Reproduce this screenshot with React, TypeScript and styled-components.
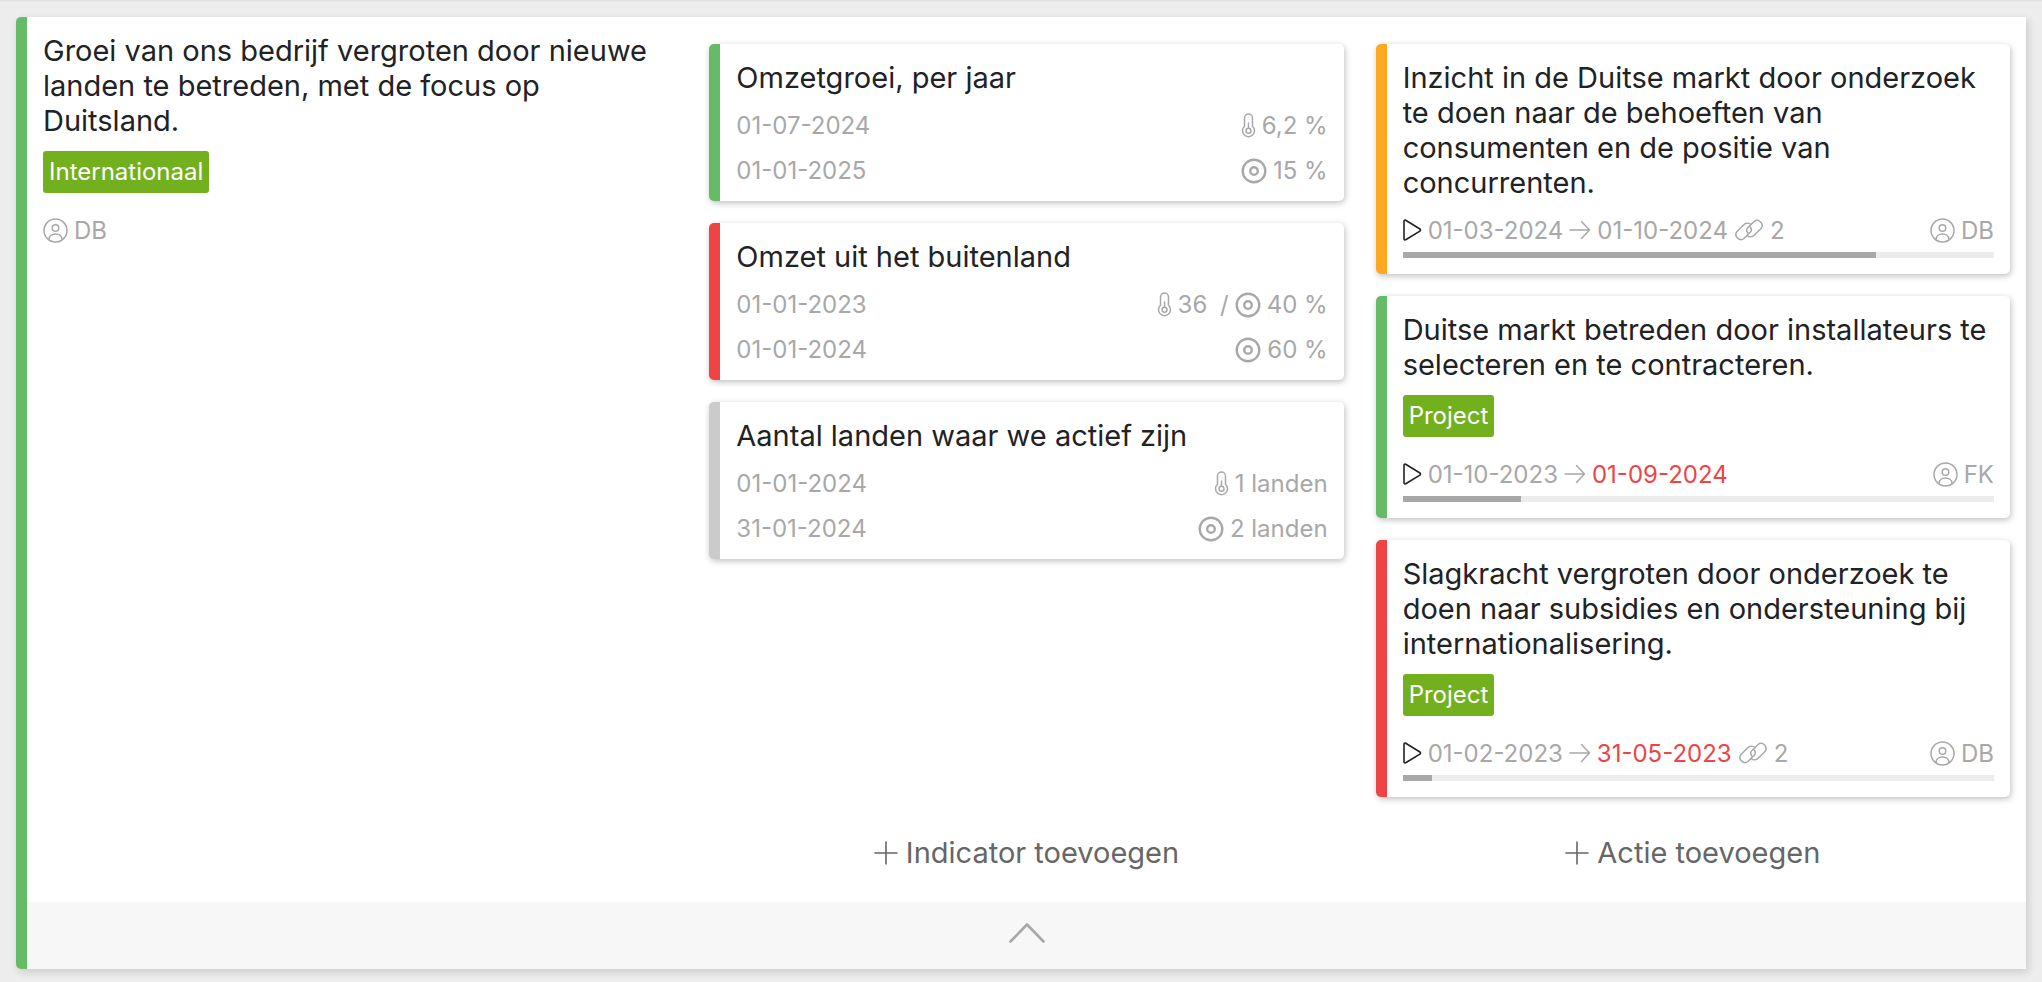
import React from "react";
import styled, { createGlobalStyle } from "styled-components";

const GlobalStyle = createGlobalStyle`
  *, *::before, *::after { box-sizing: border-box; }
  body {
    margin: 0;
    background: #ededed;
    color: #212224;
    font-family: Inter, "Liberation Sans", sans-serif;
    font-size: 24px;
  }
`;

const colors = {
  green: "#66bb66",
  red: "#ef4444",
  orange: "#ffa822",
  grey: "#cbcbcb",
  tag: "#73b01e",
  muted: "#a8a8a8",
  track: "#ececec",
};

const Page = styled.main`
  padding: 17px 16px 13px;
  box-shadow: inset 0 2px 2px -1px rgba(0, 0, 0, 0.06);
`;

const Panel = styled.section`
  border-left: 11px solid ${colors.green};
  border-radius: 5px 0 0 5px;
  background: #fff;
  box-shadow: 2px 3px 8px rgba(0, 0, 0, 0.15);
`;

const Columns = styled.div`
  display: grid;
  grid-template-columns: repeat(3, minmax(0, 1fr));
`;

const Goal = styled.div`
  padding: 16px;
`;

const Column = styled.div`
  display: flex;
  flex-direction: column;
  gap: 22px;
  padding: 27px 16px 32px;
`;

const Card = styled.article<{ $accent: string; $compact?: boolean }>`
  border-left: 11px solid ${(p) => p.$accent};
  border-radius: 5px;
  background: #fff;
  box-shadow: 1px 2px 6px rgba(0, 0, 0, 0.25);
  padding: 16px 16px ${(p) => (p.$compact ? 8 : 16)}px;
`;

const Title = styled.h2`
  margin: 0;
  font-size: 29px;
  line-height: 35px;
  font-weight: 400;
`;

const Tag = styled.span`
  display: block;
  width: fit-content;
  margin: 13px 0 15px;
  padding: 0 6px;
  border-radius: 3px;
  background: ${colors.tag};
  color: #fff;
  line-height: 42px;
`;

const Metrics = styled.div`
  margin-top: 8px;
`;

const Row = styled.div<{ $height: number; $top?: number }>`
  display: flex;
  align-items: center;
  justify-content: space-between;
  height: ${(p) => p.$height}px;
  margin-top: ${(p) => p.$top ?? 0}px;
  color: ${colors.muted};
`;

const Inline = styled.span`
  display: flex;
  align-items: center;
  gap: 6px;
  white-space: pre;
`;

const DueDate = styled.time<{ $late?: boolean }>`
  color: ${(p) => (p.$late ? colors.red : "inherit")};
`;

const Progress = styled.progress`
  display: block;
  appearance: none;
  width: 100%;
  height: 6px;
  border: 0;
  background: ${colors.track};
  &::-webkit-progress-bar { background: ${colors.track}; }
  &::-webkit-progress-value { background: ${colors.muted}; }
`;

const AddButton = styled.button`
  display: flex;
  align-items: center;
  align-self: center;
  gap: 8px;
  margin-top: auto;
  padding: 16px 0 0;
  border: 0;
  background: none;
  color: #666;
  font: inherit;
  font-size: 29px;
  line-height: 35px;
`;

const Collapse = styled.button`
  display: flex;
  align-items: center;
  justify-content: center;
  width: 100%;
  height: 67px;
  padding: 0 0 6px;
  border: 0;
  background: #f7f7f7;
  color: ${colors.muted};
`;

const Icon = styled.svg`
  display: block;
  flex: none;
  fill: none;
  stroke: currentColor;
  stroke-linecap: round;
  stroke-linejoin: round;
`;

const PlayIcon = () => (
  <Icon width="19" height="24" viewBox="0 0 19 24" strokeWidth="1.6" color="#212224">
    <path d="M1 3.2v17.6c0 1 .9 1.5 1.7.9l14.2-8.6c.8-.5.8-1.6 0-2.1L2.7 2.3C1.9 1.800 1 2.300 1 3.200z" />
  </Icon>
);

const ArrowIcon = () => (
  <Icon width="22" height="22" viewBox="0 0 22 22" strokeWidth="1.5">
    <path d="M1 11h19.500M12.500 2.500l8 8.500-8 8.500" />
  </Icon>
);

const LinkIcon = () => (
  <Icon width="30" height="24" viewBox="0 0 30 24" strokeWidth="1.5">
    <path d="M17 6.500C14.800 4.500 11.700 4.800 9.500 7L3 13.500a5 5 0 0 0 7 7L16 14.500c1.700-1.700 1.700-3.700.2-5.500" />
    <path d="M13 17.500C15.200 19.500 18.300 19.200 20.500 17L27 10.500a5 5 0 0 0-7-7L14 9.500c-1.700 1.700-1.700 3.700-.2 5.500" />
  </Icon>
);

const UserIcon = () => (
  <Icon width="25" height="25" viewBox="0 0 25 25" strokeWidth="1.5">
    <circle cx="12.5" cy="12.5" r="11.500" />
    <circle cx="12.5" cy="10" r="3.300" />
    <path d="M6 21.500c0-7.300 13-7.300 13 0" />
  </Icon>
);

const ThermoIcon = () => (
  <Icon width="15" height="25" viewBox="0 0 15 25" strokeWidth="1.5">
    <path d="M3.500 5a4 4 0 0 1 8 0v8.200a6 6 0 1 1-8 0z" />
    <circle cx="7.5" cy="17.800" r="2.500" />
    <path d="M7.500 10v5" />
  </Icon>
);

const TargetIcon = () => (
  <Icon width="26" height="26" viewBox="0 0 26 26" strokeWidth="2.4">
    <circle cx="13" cy="13" r="11.300" />
    <circle cx="13" cy="13" r="3.800" />
  </Icon>
);

const PlusIcon = () => (
  <Icon width="24" height="24" viewBox="0 0 24 24" strokeWidth="1.6">
    <path d="M1 12h22M12 1v22" />
  </Icon>
);

const ChevronIcon = () => (
  <Icon width="36" height="20" viewBox="0 0 36 20" strokeWidth="2.6">
    <path d="M1.500 18.500 18 1.500l16.500 17" />
  </Icon>
);

const User = ({ name }: { name: string }) => (
  <Inline>
    <UserIcon />
    {name}
  </Inline>
);

type Indicator = {
  title: string;
  accent: string;
  dates: [string, string];
  value: string;
  interim?: string;
  target: string;
};

const indicators: Indicator[] = [
  { title: "Omzetgroei, per jaar", accent: colors.green, dates: ["01-07-2024", "01-01-2025"], value: "6,2 %", target: "15 %" },
  { title: "Omzet uit het buitenland", accent: colors.red, dates: ["01-01-2023", "01-01-2024"], value: "36", interim: "40 %", target: "60 %" },
  { title: "Aantal landen waar we actief zijn", accent: colors.grey, dates: ["01-01-2024", "31-01-2024"], value: "1 landen", target: "2 landen" },
];

type Action = {
  title: string;
  accent: string;
  tag?: string;
  start: string;
  end: string;
  late?: boolean;
  links?: number;
  owner: string;
  progress: number;
};

const actions: Action[] = [
  {
    title: "Inzicht in de Duitse markt door onderzoek te doen naar de behoeften van consumenten en de positie van concurrenten.",
    accent: colors.orange, start: "01-03-2024", end: "01-10-2024", links: 2, owner: "DB", progress: 80,
  },
  {
    title: "Duitse markt betreden door installateurs te selecteren en te contracteren.",
    accent: colors.green, tag: "Project", start: "01-10-2023", end: "01-09-2024", late: true, owner: "FK", progress: 20,
  },
  {
    title: "Slagkracht vergroten door onderzoek te doen naar subsidies en ondersteuning bij internationalisering.",
    accent: colors.red, tag: "Project", start: "01-02-2023", end: "31-05-2023", late: true, links: 2, owner: "DB", progress: 5,
  },
];

const IndicatorCard = ({ item }: { item: Indicator }) => (
  <Card $accent={item.accent} $compact>
    <Title>{item.title}</Title>
    <Metrics>
      <Row $height={45}>
        <time>{item.dates[0]}</time>
        <Inline>
          <ThermoIcon />
          {item.value}
          {item.interim && (
            <>
              <span>{" /"}</span>
              <TargetIcon />
              {item.interim}
            </>
          )}
        </Inline>
      </Row>
      <Row $height={45}>
        <time>{item.dates[1]}</time>
        <Inline>
          <TargetIcon />
          {item.target}
        </Inline>
      </Row>
    </Metrics>
  </Card>
);

const ActionCard = ({ item }: { item: Action }) => (
  <Card $accent={item.accent}>
    <Title>{item.title}</Title>
    {item.tag && <Tag>{item.tag}</Tag>}
    <Row $height={44} $top={item.tag ? 0 : 8}>
      <Inline>
        <PlayIcon />
        <time>{item.start}</time>
        <ArrowIcon />
        <DueDate $late={item.late}>{item.end}</DueDate>
        {item.links && (
          <>
            <LinkIcon />
            {item.links}
          </>
        )}
      </Inline>
      <User name={item.owner} />
    </Row>
    <Progress value={item.progress} max={100} aria-label="Voortgang" />
  </Card>
);

export default function App() {
  return (
    <Page>
      <GlobalStyle />
      <Panel>
        <Columns>
          <Goal>
            <Title as="h1">
              Groei van ons bedrijf vergroten door nieuwe landen te betreden, met de focus op Duitsland.
            </Title>
            <Tag>Internationaal</Tag>
            <Row $height={44}>
              <User name="DB" />
            </Row>
          </Goal>
          <Column>
            {indicators.map((item) => (
              <IndicatorCard key={item.title} item={item} />
            ))}
            <AddButton type="button">
              <PlusIcon />
              Indicator toevoegen
            </AddButton>
          </Column>
          <Column>
            {actions.map((item) => (
              <ActionCard key={item.title} item={item} />
            ))}
            <AddButton type="button">
              <PlusIcon />
              Actie toevoegen
            </AddButton>
          </Column>
        </Columns>
        <Collapse type="button" aria-label="Inklappen">
          <ChevronIcon />
        </Collapse>
      </Panel>
    </Page>
  );
}
